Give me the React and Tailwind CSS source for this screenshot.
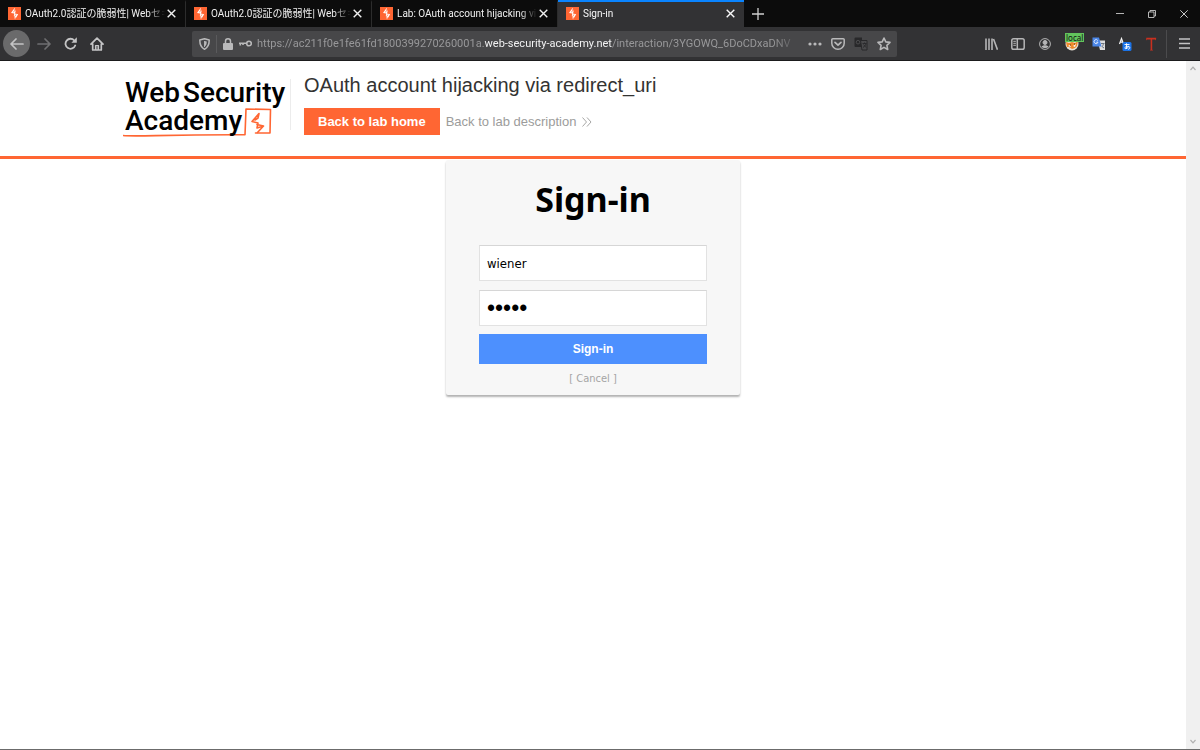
import { useState } from 'react';

const tabs = [
  { id: 1, title: 'OAuth2.0認証の脆弱性| Webセキ' },
  { id: 2, title: 'OAuth2.0認証の脆弱性| Webセキ' },
  { id: 3, title: 'Lab: OAuth account hijacking via' },
  { id: 4, title: 'Sign-in' },
];

const Favicon = () => (
  <svg className="w-[13px] h-[13px] shrink-0" viewBox="0 0 13 13">
    <rect width="13" height="13" fill="#ff6633" />
    <path d="M6.6 0.8 L3 6 L6.3 6.6 L5.8 9 L7 12.4 L10.2 7.2 L7 6.4 L7.6 4.4 Z" fill="#fff" />
    <path d="M5.6 1 L6.6 3.4 L5.4 5.4 M7.4 12 L6.6 9.6 L8 7.4" stroke="#ff6633" strokeWidth="0.7" fill="none" />
  </svg>
);

const Cross = () => (
  <svg className="w-[9px] h-[9px]" viewBox="0 0 9 9" fill="none" stroke="currentColor" strokeWidth="1.4">
    <path d="M0.7 0.7 L8.3 8.3 M8.3 0.7 L0.7 8.3" />
  </svg>
);

const Tab = ({ title, active, onSelect }) => (
  <div
    className={
      active
        ? 'flex items-center w-[186px] px-2 pb-0.5 border-t-2 border-[#0a84ff] bg-[#323234] text-[#f9f9fa]'
        : 'flex items-center w-[186px] px-2 pb-0.5 border-t-2 border-t-transparent border-r border-r-[#2c2c2c] text-[#f0f0f0]'
    }
  >
    <Favicon />
    <button onClick={onSelect} className="flex-1 min-w-0 ml-1 text-left whitespace-nowrap overflow-hidden text-[10px] leading-4 font-[Roboto,'Noto_Sans_CJK_JP',sans-serif] [mask-image:linear-gradient(to_right,#000_88%,transparent)]">
      {title}
    </button>
    <button aria-label="Close tab" className="w-3 h-4 flex items-center justify-center">
      <Cross />
    </button>
  </div>
);

const TabBar = () => {
  const [current, setCurrent] = useState(4);
  return (
    <div className="flex h-[27px] bg-[#0c0c0c] shrink-0">
      {tabs.map(t => (
        <Tab key={t.id} title={t.title} active={t.id === current} onSelect={() => setCurrent(t.id)} />
      ))}
      <button aria-label="New tab" className="w-7 flex items-center justify-center text-[#d0d0d0]">
        <svg className="w-3 h-3" viewBox="0 0 12 12" stroke="currentColor" strokeWidth="1.3"><path d="M6 0v12M0 6h12" /></svg>
      </button>
      <div className="ml-auto flex items-center text-[#c8c8c8]">
        <button aria-label="Minimize" className="w-8 flex justify-center">
          <svg className="w-2 h-2" viewBox="0 0 8 8" stroke="currentColor"><path d="M0 3.5h8" strokeWidth="0.9" /></svg>
        </button>
        <button aria-label="Restore" className="w-8 flex justify-center">
          <svg className="w-2 h-2" viewBox="0 0 8 8" fill="none" stroke="currentColor" strokeWidth="0.9"><path d="M0.5 2h5.5v5.5h-5.5zM2 2V0.5h5.5v5.5H6" /></svg>
        </button>
        <button aria-label="Close" className="w-8 flex justify-center">
          <svg className="w-2 h-2" viewBox="0 0 8 8" stroke="currentColor"><path d="M0.3 0.3l7.4 7.4M7.7 0.3L0.3 7.7" /></svg>
        </button>
      </div>
    </div>
  );
};

const AddressBar = () => (
  <div className="flex items-center h-[26px] w-[705px] rounded-xs bg-[#474749] text-[#b9b9ba]">
    <button aria-label="Tracking protection" className="w-6 flex justify-center">
      <svg className="w-[11px] h-3" viewBox="0 0 11 12" fill="none" stroke="currentColor">
        <path d="M5.5 0.7 L10.2 1.9 C10.3 6.5 9.2 9.5 5.5 11.3 C1.8 9.5 0.7 6.5 0.8 1.9 Z" strokeWidth="1.5" strokeLinejoin="round" />
        <path d="M5.5 3 L7.7 3.5 C7.7 6 7.2 7.7 5.5 8.8 Z" fill="currentColor" stroke="none" />
        <path d="M5.5 3v6" strokeWidth="0.9" />
      </svg>
    </button>
    <span className="w-px h-[18px] bg-[#5a5a5c]" />
    <button aria-label="Site information" className="w-5 ml-px flex justify-center">
      <svg className="w-[10px] h-3" viewBox="0 0 10 12">
        <rect y="5" width="10" height="7" rx="1" fill="currentColor" />
        <path d="M2.5 6V3.3a2.5 2.5 0 0 1 5 0V6" fill="none" stroke="currentColor" strokeWidth="1.5" />
      </svg>
    </button>
    <button aria-label="Saved login" className="w-[14px] flex justify-center">
      <svg className="w-[13px] h-[7px]" viewBox="0 0 13 7" fill="none" stroke="currentColor" strokeWidth="1.6">
        <circle cx="10" cy="3.5" r="2.3" />
        <path d="M7.5 3.2H0M1.3 3v2.5M4 3v2" />
      </svg>
    </button>
    <div role="textbox" aria-label="Address" className="flex-1 min-w-0 ml-[5px] overflow-hidden whitespace-nowrap text-[11px] leading-4 font-[Roboto,sans-serif] text-[#98989a] [mask-image:linear-gradient(to_right,#000_95%,transparent)]">
      https://ac211f0e1fe61fd1800399270260001a.<span className="text-[#f2f2f3]">web-security-academy.net</span>/interaction/3YGOWQ_6DoCDxaDNV
    </div>
    <div className="flex items-center gap-[9px] ml-2 pr-[6px]">
      <button aria-label="Page actions">
        <svg className="w-[14px] h-1" viewBox="0 0 14 4" fill="currentColor"><circle cx="2" cy="2" r="1.6" /><circle cx="7" cy="2" r="1.6" /><circle cx="12" cy="2" r="1.6" /></svg>
      </button>
      <button aria-label="Save to Pocket">
        <svg className="w-[14px] h-3" viewBox="0 0 14 12" fill="none" stroke="currentColor" strokeWidth="1.5" strokeLinecap="round" strokeLinejoin="round">
          <path d="M1.8 0.8h10.4a1 1 0 0 1 1 1v3.4a6.2 6 0 0 1-12.4 0V1.8a1 1 0 0 1 1-1z" />
          <path d="M4 4.3l3 2.8 3-2.8" strokeWidth="1.7" />
        </svg>
      </button>
      <button aria-label="Translate this page">
        <svg className="w-[14px] h-[14px]" viewBox="0 0 14 14" fill="none">
          <path d="M1.5 0.5H8V10H1.5a1 1 0 0 1-1-1V1.5a1 1 0 0 1 1-1z" fill="#28282a" />
          <path d="M6.5 3.5H13V13H8z" fill="#4a4a4c" stroke="#28282a" />
          <circle cx="4" cy="5.2" r="1.8" stroke="#4c4c4e" />
          <path d="M8.5 6.5h4M10.5 5.5v1M12 6.5c-.5 2-1.5 3-3 4M9.5 7.5l2.5 3" stroke="#28282a" strokeWidth="0.9" />
        </svg>
      </button>
      <button aria-label="Bookmark">
        <svg className="w-[14px] h-[14px]" viewBox="0 0 14 14" fill="none" stroke="currentColor" strokeWidth="1.6" strokeLinejoin="round">
          <path d="M7 1l1.8 3.9 4.2.5-3.1 2.9.8 4.2L7 10.4l-3.7 2.1.8-4.2L1 5.4l4.2-.5z" />
        </svg>
      </button>
    </div>
  </div>
);

const Extensions = () => (
  <div className="flex items-center gap-[13px] text-[#b5b5b6]">
    <button aria-label="Library">
      <svg className="w-[14px] h-3" viewBox="0 0 14 12" stroke="currentColor" strokeWidth="1.6"><path d="M2 0.5v11.5M5 0.5v11.5M8 0.5v11.5M9.5 1l4 10.8" /></svg>
    </button>
    <button aria-label="Sidebars">
      <svg className="w-[14px] h-3" viewBox="0 0 14 12" fill="none" stroke="currentColor" strokeWidth="1.5">
        <rect x="0.8" y="0.8" width="12.4" height="10.4" rx="1.8" />
        <path d="M6.3 1v10" />
        <path d="M2.3 3.3h2.6M2.3 5.3h2.6M2.3 7.3h2.6" strokeWidth="1" />
      </svg>
    </button>
    <button aria-label="Account">
      <svg className="w-3 h-3 mx-px" viewBox="0 0 12 12" fill="none" stroke="currentColor">
        <circle cx="6" cy="6" r="5.4" />
        <circle cx="6" cy="4.5" r="2" fill="currentColor" />
        <path d="M2.5 8.8C3.5 6.8 8.5 6.8 9.5 8.8 8 10.4 4 10.4 2.5 8.8z" fill="currentColor" stroke="none" />
      </svg>
    </button>
    <button aria-label="FoxyProxy" className="relative">
      <svg className="w-[14px] h-[14px]" viewBox="0 0 14 14">
        <circle cx="7" cy="7" r="6.5" fill="#e9e2d6" />
        <path d="M1 5l3 1 3-1 3 1 3-2-1 5-2 2-3 1-3-2-2 0z" fill="#ef8a2c" />
        <path d="M3 9l2-1 1 2zM8 9l3-2-1 3z" fill="#fff" />
        <path d="M5 8h1M9 7h1" stroke="#6d3a12" />
      </svg>
      <span className="absolute left-0 -top-1 px-px bg-[#62c45c] text-[#111] text-[8px] leading-[9px]">local</span>
    </button>
    <button aria-label="Google Translate">
      <svg className="w-[13px] h-[13px]" viewBox="0 0 13 13" fill="none">
        <path d="M5.5 3.5H13V13H8z" fill="#dcdcdc" />
        <path d="M0.5 0.5H7L9.5 9.5H0.5z" fill="#4a86e8" />
        <path d="M5.8 3.6a2 2 0 1 0 .2 1.6H4.2" stroke="#e6eefc" strokeWidth="0.9" />
        <path d="M9 6.5h3.5M11.5 6.5c-.3 2-1 2.5-1.5 3l2 1.5" stroke="#6b7480" />
      </svg>
    </button>
    <button aria-label="Translator">
      <svg className="w-[14px] h-[14px]" viewBox="0 0 14 14" fill="none">
        <path d="M1.5 7L3.5 1.5L5.5 7M2.2 5.2h2.6" stroke="#f4f4f4" strokeWidth="1.2" />
        <rect x="4.5" y="5" width="9" height="9" rx="1.5" fill="#1a73e8" />
        <path d="M6.5 7.5h5M8.5 6.3v5.5M11 9c-1 2.5-4 3.5-4.2 2 0-1.8 5-2.6 5-.3 0 1-.8 1.5-1.8 1.6" stroke="#fff" strokeWidth="0.9" />
      </svg>
    </button>
    <button aria-label="Text tool">
      <svg className="w-3 h-[14px]" viewBox="0 0 12 14"><path d="M1 3.6L1.3 0.8H11.2l-.3 2.8-.8-1.2H7.2v10l1 1H4.8l.8-1v-10H2z" fill="#c9301f" /></svg>
    </button>
  </div>
);

const Toolbar = () => (
  <div className="flex items-center h-[34px] bg-[#323234] border-b border-[#1b1b1d] shrink-0 text-[#c4c4c5]">
    <button aria-label="Back" className="ml-[3px] w-[27px] h-[27px] rounded-full bg-[#6a6a6b] flex items-center justify-center">
      <svg className="w-[14px] h-3" viewBox="0 0 14 12" fill="none" stroke="currentColor" strokeWidth="1.7" strokeLinecap="round" strokeLinejoin="round"><path d="M13 6H1.2M6 1L1 6l5 5" /></svg>
    </button>
    <button aria-label="Forward" className="ml-[7px] text-[#6f6f71]">
      <svg className="w-[14px] h-3" viewBox="0 0 14 12" fill="none" stroke="currentColor" strokeWidth="1.7" strokeLinecap="round" strokeLinejoin="round"><path d="M1 6h11.8M8 1l5 5-5 5" /></svg>
    </button>
    <button aria-label="Reload" className="ml-[13px]">
      <svg className="w-[13px] h-[13px]" viewBox="0 0 13 13" fill="none" stroke="currentColor" strokeWidth="1.8"><path d="M10.3 3.5A5 5 0 1 0 11.2 8.5" strokeLinecap="round" /><path d="M12.8 0.3v5.4H7.4z" fill="currentColor" stroke="none" /></svg>
    </button>
    <button aria-label="Home" className="ml-[13px]">
      <svg className="w-[14px] h-[14px]" viewBox="0 0 14 14" fill="none" stroke="currentColor" strokeWidth="1.7" strokeLinecap="round" strokeLinejoin="round"><path d="M1 7.2L7 1.2l6 6M2.7 6.5V13h8.6V6.5" /><path d="M5.5 12.5v-4h3v4" strokeWidth="1.2" /><path d="M7 9v4" strokeWidth="1" /></svg>
    </button>
    <div className="ml-[88px]">
      <AddressBar />
    </div>
    <div className="ml-auto flex items-center gap-[9px]">
      <Extensions />
      <span className="w-px h-7 bg-[#4b4b4d]" />
    </div>
    <button aria-label="Menu" className="ml-3 mr-[10px]">
      <svg className="w-[11px] h-[11px]" viewBox="0 0 11 11" stroke="currentColor" strokeWidth="1.5"><path d="M0 1h11M0 5.5h11M0 10h11" /></svg>
    </button>
  </div>
);

const AcademyLogo = () => (
  <a href="#academy" className="relative block w-[162px] h-[60px] font-[Roboto,sans-serif] font-medium text-[28px] leading-[28px] text-black whitespace-nowrap">
    <svg className="absolute left-0 top-0 w-[162px] h-[60px]" viewBox="0 0 162 60" fill="none" stroke="#ff6633" strokeWidth="1.6" strokeLinecap="round" strokeLinejoin="round">
      <path d="M0 56.5 C12 58 40 55.5 122 55.8 L123 30 L147.5 30.5 L147 54 L132.5 54" />
      <path d="M136 34.5 L129 42.5 L135 44 L134 49 L140.5 47 L134.5 53.5 M136 34.5 L135 39 L132 41 M134 45.5 L140.5 47" />
    </svg>
    <span className="relative flex gap-[3px] pl-[2px]"><span>Web</span><span>Security</span></span>
    <span className="relative block pl-[2px]">Academy</span>
  </a>
);

const LabHeader = () => (
  <header className="h-[98px] border-b-[3px] border-[#ff6633] bg-white font-['Liberation_Sans',sans-serif]">
    <div className="max-w-[940px] mx-auto flex pt-[18px]">
      <AcademyLogo />
      <span className="w-px h-[51px] bg-[#ececec] ml-[5px]" />
      <div className="ml-[13px] -mt-1">
        <h2 className="text-[20px] leading-[20px] text-[#333332]">OAuth account hijacking via redirect_uri</h2>
        <div className="flex items-center mt-[13px]">
          <a href="#lab" className="bg-[#ff6633] text-white font-bold text-[13px] leading-[27px] px-[14px]">Back to lab home</a>
          <a href="#description" className="ml-[6px] flex items-center text-[13px] leading-[27px] text-[#9c9c9b]">
            Back to lab description
            <svg className="ml-[6px] w-[10px] h-[10px]" viewBox="0 0 10 10" fill="none" stroke="currentColor" strokeWidth="0.9"><path d="M0.5 0.5l4 4.5-4 4.5M5 0.5l4 4.5-4 4.5" /></svg>
          </a>
        </div>
      </div>
    </div>
  </header>
);

const LoginCard = () => {
  const [login, setLogin] = useState('wiener');
  const [password, setPassword] = useState('peter');

  return (
    <div className="w-[294px] mx-auto mt-px px-[33px] pb-2 bg-[#f7f7f7] rounded-xs shadow-[0_2px_2px_rgba(0,0,0,0.3)] font-['DejaVu_Sans_Condensed','DejaVu_Sans',sans-serif]">
      <h1 className="pt-4 text-center font-bold text-[34px] leading-[46px] font-['Noto_Sans',sans-serif] text-black">Sign-in</h1>
      <form onSubmit={e => e.preventDefault()} className="mt-[23px] flex flex-col">
        <input
          type="text"
          aria-label="Login"
          value={login}
          onChange={e => setLogin(e.target.value)}
          className="h-9 mb-[9px] px-[7px] bg-white border border-[#e2e2e2] border-t-[#d6d6d6] text-[13px] text-black outline-none"
        />
        <input
          type="password"
          aria-label="Password"
          value={password}
          onChange={e => setPassword(e.target.value)}
          className="h-9 mb-2 px-[7px] bg-white border border-[#e2e2e2] border-t-[#d6d6d6] text-[23px] font-['Liberation_Sans',sans-serif] text-black outline-none"
        />
        <button type="submit" className="h-[30px] bg-[#4d90fe] text-white font-bold text-[12px] font-['Liberation_Sans',sans-serif]">
          Sign-in
        </button>
      </form>
      <div className="mt-[7px] text-center text-[11px] leading-4 text-[#a5a5a5]">
        <a href="#cancel">[ Cancel ]</a>
      </div>
    </div>
  );
};

const Scrollbar = () => (
  <div className="w-[14px] shrink-0 bg-[#f0f0f0] flex flex-col justify-between items-center py-[5px] text-[#b0b0b0]">
    <svg className="w-[6px] h-[5px]" viewBox="0 0 6 5" fill="none" stroke="currentColor" strokeWidth="1.2"><path d="M0.5 4L3 1.2L5.5 4" /></svg>
    <svg className="w-[6px] h-[5px]" viewBox="0 0 6 5" fill="none" stroke="currentColor" strokeWidth="1.2"><path d="M0.5 1L3 3.8L5.5 1" /></svg>
  </div>
);

const App = () => {
  return (
    <div className="flex flex-col h-screen bg-white border-b border-[#6b6b6b] font-['Noto_Sans','Noto_Sans_CJK_JP',sans-serif]">
      <TabBar />
      <Toolbar />
      <div className="flex flex-1 min-h-0">
        <main className="flex-1 min-w-0">
          <LabHeader />
          <LoginCard />
        </main>
        <Scrollbar />
      </div>
    </div>
  );
};

export default App;
